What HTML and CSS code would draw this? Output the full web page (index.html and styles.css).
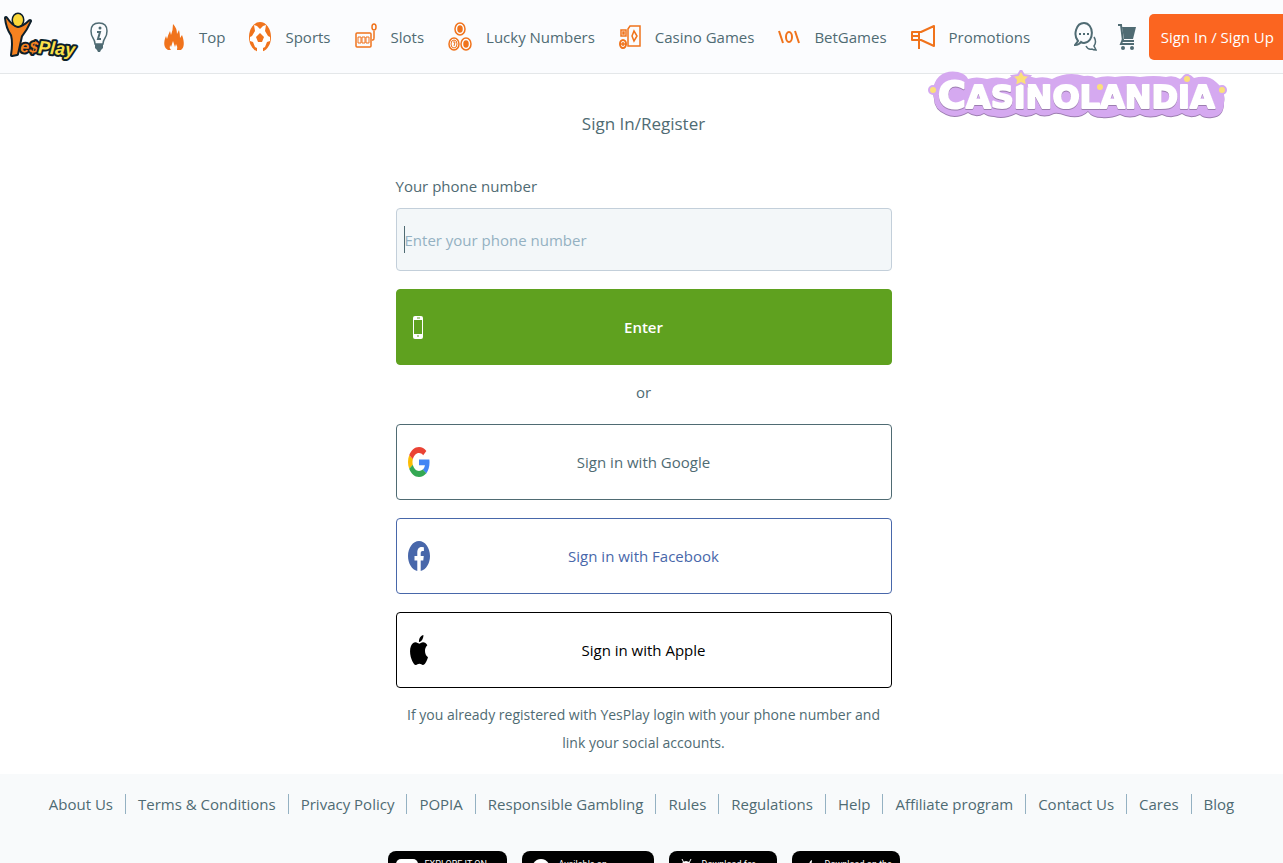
FILE: index.html
```html
<!DOCTYPE html>
<html lang="en">
<head>
  <meta charset="UTF-8" />
  <meta name="viewport" content="width=device-width, initial-scale=1.0" />
  <title>YesPlay - Sign In/Register</title>
  <link rel="stylesheet" href="styles.css">
</head>
<body>
  <header class="header">
    <a href="#" class="logo" aria-label="YesPlay">
      <svg width="76" height="50" viewBox="0 0 76 50">
        <g stroke="#0d1f2b" stroke-width="4" stroke-linejoin="round" paint-order="stroke">
          <text class="logo-text" x="16" y="40" fill="#f58220" transform="rotate(4 16 40)">e$<tspan class="logo-play" fill="#fbe04a">Play</tspan></text>
          <path d="M2 6 Q8 15 14 16 Q20 15 26 9 Q22 18 17 24 L13 42 L8 43 Q10 31 8 23 Q3 16 2 6Z" fill="#f58220"/>
          <ellipse cx="14" cy="8" rx="5" ry="6" fill="#fbd83a" stroke-width="3"/>
        </g>
      </svg>
    </a>
    <a href="#" class="info" aria-label="Info">
      <svg width="18" height="32" viewBox="0 0 18 32">
        <path d="M5 23 Q5 20 3 17 Q1 14 1 10 C1 5 4 2 9 2 S17 5 17 10 Q17 14 15 17 Q13 20 13 23Z" fill="none" stroke="#4f6b73" stroke-width="1.5"/>
        <path d="M5 23h8v4l-2 2-1 2H8l-1-2-2-2z" fill="#4f6b73"/>
        <circle cx="10" cy="7" r="1.5" fill="#4f6b73"/>
        <path d="M7 11h3l-2 7h3" fill="none" stroke="#4f6b73" stroke-width="2"/>
      </svg>
    </a>

    <nav class="nav">
      <a href="#">
        <svg width="22" height="30" viewBox="0 0 22 30"><path d="M5 28 C1 26 0 21 3 14 L4 17 Q5 13 7 9 L8 13 Q10 8 10 2 Q14 6 14 12 L16 8 Q17 12 17 16 L19 13 C22 21 21 26 18 28 H14 Q15 25 13 22 L12 25 Q11 22 10 19 L8 25 L7 23 Q6 26 8 28Z" fill="#f0731c"/></svg>
        Top
      </a>
      <a href="#">
        <svg width="22" height="30" viewBox="0 0 22 30"><ellipse cx="11" cy="15" rx="11" ry="15" fill="#f0731c"/><path d="M5 3l3 1 3 3 3-3 3-1-1 6 3 5 2 1v4l-3 1-2 5-2 1v4H8v-4l-2-1-2-5-3-1v-4l2-1 3-5z" fill="#fff"/><path d="M11 11l4 4-2 5H9l-2-5z" fill="#f0731c"/></svg>
        Sports
      </a>
      <a href="#">
        <svg width="22" height="30" viewBox="0 0 22 30" fill="none" stroke="#f0731c"><rect x="1" y="11" width="15" height="14" rx="1" stroke-width="1.5"/><path d="M3 15h3v6H3zM7 15h3v6H7zM11 15h3v6h-3z"/><path d="M17 18h1q1 0 1-2V9" stroke-width="1.5"/><ellipse cx="19" cy="5" rx="2" ry="3" stroke-width="1.5"/></svg>
        Slots
      </a>
      <a href="#">
        <svg width="24" height="30" viewBox="0 0 24 30" fill="none" stroke="#f0731c" stroke-width="1.5"><ellipse cx="12" cy="7" rx="5" ry="6"/><ellipse cx="12" cy="7" rx="2" ry="3" fill="#f0731c"/><ellipse cx="6" cy="22" rx="5" ry="6"/><ellipse cx="6" cy="22" rx="3" ry="4" stroke-width="1"/><path d="M5 20h2l-1 4" stroke-width="1"/><ellipse cx="18" cy="22" rx="5" ry="6"/><ellipse cx="18" cy="22" rx="2" ry="3" fill="#f0731c"/></svg>
        Lucky Numbers
      </a>
      <a href="#">
        <svg width="22" height="30" viewBox="0 0 22 30" fill="none" stroke="#f0731c" stroke-width="1.5"><path d="M2 8h5v6H2zM4 10h1v2H4zM9 7l2-3h10v20H9z"/><path d="M15 9l3 5-3 5-2-5z"/><ellipse cx="4" cy="22" rx="3" ry="4" stroke-width="2"/><path d="M4 20v4M2 22h4"/></svg>
        Casino Games
      </a>
      <a href="#">
        <svg width="22" height="30" viewBox="0 0 22 30" fill="none" stroke="#f0731c" stroke-width="2"><path d="M1 9l4 12M17 9l4 12"/><ellipse cx="11" cy="15" rx="3" ry="5"/></svg>
        BetGames
      </a>
      <a href="#">
        <svg width="24" height="30" viewBox="0 0 24 30" fill="none" stroke="#f0731c" stroke-width="2" stroke-linejoin="round"><path d="M1 10h9L23 4v20L10 18H1zM8 10v17M1 14h7"/></svg>
        Promotions
      </a>
    </nav>

    <div class="account">
      <a href="#" aria-label="Chat">
        <svg width="23" height="30" viewBox="0 0 23 30" fill="none" stroke="#4f6b73" stroke-width="2"><path d="M1 23 L4 19 C-1 13 2 1 10 1 C20 1 21 20 10 21 Q8 21 7 20 Q5 23 1 23Z"/><path d="M20 15 Q23 20 20 24 L22 28 Q19 28 18 27 Q14 28 12 24" stroke-width="1.5"/><path d="M5 12h2M9 12h2M13 12h2"/></svg>
      </a>
      <a href="#" aria-label="Cart">
        <svg width="20" height="30" viewBox="0 0 20 30"><path d="M1 3h3l2 16h11" fill="none" stroke="#4f6b73" stroke-width="2"/><path d="M5 5h14l-3 12H7z" fill="#4f6b73"/><path d="M6 17l-2 5h13" fill="none" stroke="#4f6b73" stroke-width="2"/><circle cx="6" cy="26" r="2" fill="#4f6b73"/><circle cx="15" cy="26" r="2" fill="#4f6b73"/></svg>
      </a>
      <button type="button" class="sign-btn">Sign In / Sign Up</button>
    </div>
  </header>

  <div class="watermark">
    <svg width="300" height="50" viewBox="0 0 300 50">
      <defs>
        <path id="cloud" d="M6 28 C2 8 16 -1 30 2 Q38 4 40 9 Q48 6 59 9 Q68 6 79 9 Q86 4 96 5 Q104 7 108 8 Q116 6 124 9 Q140 1 156 6 Q164 5 168 8 Q178 5 187 7 Q200 5 212 7 Q226 5 238 7 Q246 5 252 9 Q260 1 266 8 Q280 4 288 12 Q298 20 296 32 Q296 46 284 47 Q276 48 272 44 Q262 49 254 43 Q244 49 234 44 Q222 49 212 44 Q202 49 192 44 Q182 48 174 47 Q164 47 160 41 Q152 49 138 45 Q130 42 126 43 Q116 48 108 43 Q98 49 88 43 Q76 49 66 46 Q60 46 56 43 Q48 48 40 42 Q28 49 18 44 Q6 39 6 28Z"/>
      </defs>
      <use href="#cloud" y="1" fill="#9c7db0"/>
      <use href="#cloud" fill="#d5a9f0"/>
      <text class="watermark-text" x="10" y="38"><tspan class="watermark-cap">C</tspan>ASINOLANDIA</text>
      <g fill="#fbe07a" stroke="#d5a9f0" stroke-width="2">
        <path d="M93 0l3 5 6 1-4 4 1 6-6-3-6 3 1-6-4-4 6-1z"/>
        <circle cx="5" cy="20" r="4"/><circle cx="172" cy="17" r="4"/><circle cx="259" cy="9" r="4"/><circle cx="294" cy="20" r="4"/>
      </g>
    </svg>
  </div>

  <main class="main">
    <h1>Sign In/Register</h1>
    <form class="login">
      <label for="phone">Your phone number</label>
      <input type="tel" id="phone" placeholder="Enter your phone number">
      <button type="button" class="btn btn-enter">
        <svg width="22" height="30" viewBox="0 0 22 30"><rect x="5" y="4" width="10" height="23" rx="2" fill="#fff"/><path d="M6 8h8v14H6z" fill="#5fa11f"/><path d="M9 6h3M9 24h2" stroke="#5fa11f"/></svg>
        <span>Enter</span>
      </button>
      <p class="or">or</p>
      <button type="button" class="btn btn-google">
        <svg width="22" height="30" viewBox="0 0 48 48" preserveAspectRatio="none"><path fill="#EA4335" d="M24 9.5c3.54 0 6.71 1.22 9.21 3.6l6.85-6.85C35.9 2.38 30.47 0 24 0 14.62 0 6.51 5.38 2.56 13.22l7.98 6.19C12.43 13.72 17.74 9.5 24 9.5z"/><path fill="#4285F4" d="M46.98 24.55c0-1.57-.15-3.09-.38-4.55H24v9.02h12.94c-.58 2.96-2.26 5.48-4.78 7.18l7.73 6c4.51-4.18 7.09-10.36 7.09-17.65z"/><path fill="#FBBC05" d="M10.53 28.59c-.48-1.45-.76-2.99-.76-4.59s.27-3.14.76-4.59l-7.98-6.19C.92 16.46 0 20.12 0 24c0 3.88.92 7.54 2.56 10.78l7.97-6.19z"/><path fill="#34A853" d="M24 48c6.48 0 11.93-2.13 15.89-5.81l-7.73-6c-2.15 1.45-4.92 2.3-8.16 2.3-6.26 0-11.57-4.22-13.47-9.91l-7.98 6.19C6.51 42.62 14.62 48 24 48z"/></svg>
        <span>Sign in with Google</span>
      </button>
      <button type="button" class="btn btn-facebook">
        <svg width="22" height="30" viewBox="0 0 24 24" preserveAspectRatio="none"><path fill="#4867aa" d="M24 12.07C24 5.4 18.63 0 12 0S0 5.4 0 12.07C0 18.1 4.39 23.1 10.13 24v-8.44H7.08v-3.49h3.05V9.41c0-3.02 1.79-4.69 4.53-4.69 1.31 0 2.68.24 2.68.24v2.97h-1.51c-1.49 0-1.96.93-1.96 1.89v2.25h3.33l-.53 3.49h-2.8V24C19.61 23.1 24 18.1 24 12.07z"/></svg>
        <span>Sign in with Facebook</span>
      </button>
      <button type="button" class="btn btn-apple">
        <svg width="22" height="30" viewBox="0 0 24 24" preserveAspectRatio="none"><path d="M12.15 6.9c-.95 0-2.42-1.08-3.96-1.04-2.04.03-3.91 1.18-4.96 3.01-2.12 3.68-.55 9.1 1.52 12.09 1.01 1.45 2.21 3.09 3.79 3.04 1.52-.07 2.09-.99 3.94-.99 1.83 0 2.35.99 3.96.95 1.64-.03 2.68-1.48 3.68-2.95 1.16-1.69 1.64-3.32 1.66-3.42-.04-.01-3.18-1.22-3.22-4.86-.03-3.04 2.48-4.49 2.6-4.56-1.43-2.09-3.62-2.32-4.39-2.38-2-.15-3.67 1.09-4.62 1.11zm3.38-3.07c.84-1.01 1.4-2.43 1.25-3.83-1.21.05-2.66.8-3.53 1.82-.78.9-1.45 2.34-1.27 3.71 1.34.1 2.71-.69 3.55-1.7z"/></svg>
        <span>Sign in with Apple</span>
      </button>
      <p class="note">If you already registered with YesPlay login with your phone number and link your social accounts.</p>
    </form>
  </main>

  <footer class="footer">
    <ul class="links">
      <li><a href="#">About Us</a></li>
      <li><a href="#">Terms &amp; Conditions</a></li>
      <li><a href="#">Privacy Policy</a></li>
      <li><a href="#">POPIA</a></li>
      <li><a href="#">Responsible Gambling</a></li>
      <li><a href="#">Rules</a></li>
      <li><a href="#">Regulations</a></li>
      <li><a href="#">Help</a></li>
      <li><a href="#">Affiliate program</a></li>
      <li><a href="#">Contact Us</a></li>
      <li><a href="#">Cares</a></li>
      <li><a href="#">Blog</a></li>
    </ul>
    <div class="stores">
      <a href="#" class="store store-md"><svg width="22" height="30" viewBox="0 0 22 30"><rect width="22" height="30" rx="5" fill="#fff"/></svg>EXPLORE IT ON</a>
      <a href="#" class="store store-lg"><svg width="22" height="30" viewBox="0 0 22 30"><ellipse cx="11" cy="15" rx="11" ry="15" fill="#fff"/></svg>Available on</a>
      <a href="#" class="store"><svg width="18" height="30" viewBox="0 0 18 30"><path d="M5 0l2 4M14 0l-2 4" stroke="#fff"/><path d="M3 12Q3 2 9 2T15 12V24H3z" fill="#fff"/></svg>Download for</a>
      <a href="#" class="store"><svg width="18" height="30" viewBox="0 0 18 30"><path d="M9 7q0-5 3-6 0 5-3 6zM9 9q6-3 7 2-3 5 0 9-3 8-7 5-4 3-6-4-3-13 6-12z" fill="#fff"/></svg>Download on the</a>
    </div>
  </footer>
</body>
</html>
```
FILE: styles.css
```css
* {
  box-sizing: border-box;
}

body {
  margin: 0;
  font-family: "Open Sans", sans-serif;
  font-size: 15px;
  line-height: 28px;
  color: #4f6b73;
  background: #fff;
}

a {
  color: inherit;
  text-decoration: none;
}

svg {
  display: block;
  flex: none;
}

button,
input {
  font: inherit;
}

.header {
  display: flex;
  align-items: center;
  height: 74px;
  padding-left: 4px;
  background: #fbfcfe;
  border-bottom: 1px solid #e4e7e9;
  white-space: nowrap;
}

.logo-text {
  font: italic bold 16px "Liberation Sans Narrow", "Liberation Sans", sans-serif;
}

.logo-play {
  font-size: 18px;
}

.info {
  margin-left: 10px;
}

.nav {
  display: flex;
  gap: 24px;
  margin-left: 55px;
}

.nav a {
  display: flex;
  align-items: center;
  gap: 14px;
}

.account {
  display: flex;
  align-items: center;
  gap: 20px;
  margin-left: auto;
}

.sign-btn {
  height: 46px;
  margin-left: -8px;
  padding: 0 9px 0 12px;
  border: 0;
  border-radius: 5px 0 0 5px;
  background: #fb6520;
  color: #fff;
}

/* floats over the header's bottom edge */
.watermark {
  position: absolute;
  top: 70px;
  right: 55px;
}

.watermark-text {
  font: bold 32px "DejaVu Sans", sans-serif;
  fill: #fff;
  stroke: #fff;
  stroke-width: 2px;
  stroke-linejoin: round;
  filter: drop-shadow(0 1px 0 #9c7db0);
}

.watermark-cap {
  font-size: 38px;
}

.main {
  padding: 36px 12px 17px 16px;
}

h1 {
  margin: 0 0 34px;
  font-size: 17px;
  font-weight: 400;
  text-align: center;
}

.login {
  display: flex;
  flex-direction: column;
  max-width: 496px;
  margin: 0 auto;
}

.login label {
  margin-bottom: 8px;
}

.login input {
  height: 63px;
  margin-bottom: 18px;
  padding: 0 8px;
  border: 1px solid #c3cfda;
  border-radius: 4px;
  outline: 0;
  background: #f3f7f9;
  color: #4f6b73;
}

/* resting caret in the empty field */
.login input:placeholder-shown:not(:focus) {
  background: linear-gradient(#4f6b73, #4f6b73) 7px 50% / 1px 27px no-repeat #f3f7f9;
}

.login input::placeholder {
  color: #94b1c2;
}

.btn {
  display: flex;
  align-items: center;
  height: 76px;
  margin-bottom: 18px;
  padding: 0 11px;
  border: 1px solid #4f6b73;
  border-radius: 4px;
  background: #fff;
  color: #4f6b73;
}

/* right padding balances the icon so the label stays centred */
.btn span {
  flex: 1;
  padding-right: 22px;
}

.btn-enter {
  margin-bottom: 0;
  border-color: #5fa11f;
  background: #5fa11f;
  color: #fff;
  font-weight: 600;
}

.btn-facebook {
  border-color: #4867aa;
  color: #4867aa;
}

.btn-apple {
  margin-bottom: 13px;
  border-color: #000;
  color: #000;
}

.or {
  margin: 13px 0 18px;
  text-align: center;
}

.note {
  margin: 0;
  font-size: 14px;
  text-align: center;
}

.footer {
  padding: 16px 0 20px;
  background: #f8fafb;
}

.links {
  display: flex;
  flex-wrap: wrap;
  justify-content: center;
  margin: 0;
  padding: 0;
  list-style: none;
}

.links li {
  display: flex;
  align-items: center;
}

.links li + li::before {
  content: "";
  height: 20px;
  margin: 0 12px;
  border-left: 1px solid #94b1c2;
}

.stores {
  display: flex;
  justify-content: center;
  gap: 15px;
  margin-top: 33px;
  padding-left: 4px;
}

.store {
  display: flex;
  align-items: flex-start;
  gap: 7px;
  width: 108px;
  height: 52px;
  padding: 8px;
  border-radius: 8px;
  background: #000;
  color: #fff;
  font: 9px/10px Roboto, sans-serif;
  white-space: nowrap;
}

.store-md {
  width: 119px;
}

.store-lg {
  width: 132px;
}
```
